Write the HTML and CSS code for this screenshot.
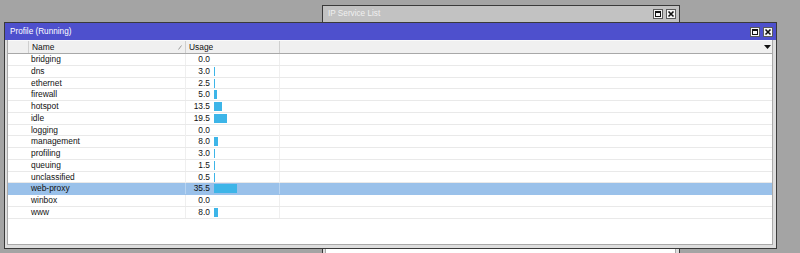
FILE: index.html
```html
<!DOCTYPE html>
<html lang="en">
<head>
    <meta charset="utf-8"/>
    <title>Profile (Running)</title>
    <link rel="stylesheet" href="styles.css">
</head>
<body>
<div class="desktop">

    <!-- window behind -->
    <div class="window back-window">
        <div class="titlebar titlebar-grey">
            <span class="title">IP Service List</span>
            <div class="buttons">
                <span class="btn btn-max"></span>
                <span class="btn btn-close">
                    <svg width="8" height="8" viewBox="0 0 8 8"><path d="M1.5 1.5 L6.5 6.5 M6.5 1.5 L1.5 6.5" stroke="#111" stroke-width="1.6"/></svg>
                </span>
            </div>
        </div>
        <div class="frame">
            <div class="list"></div>
        </div>
    </div>

    <!-- profile window -->
    <div class="window main-window">
        <div class="titlebar titlebar-blue">
            <span class="title">Profile (Running)</span>
            <div class="buttons">
                <span class="btn btn-max"></span>
                <span class="btn btn-close">
                    <svg width="8" height="8" viewBox="0 0 8 8"><path d="M1.5 1.5 L6.5 6.5 M6.5 1.5 L1.5 6.5" stroke="#111" stroke-width="1.6"/></svg>
                </span>
            </div>
        </div>
        <div class="frame">
            <div class="list">
                <div class="row head">
                    <div class="cell"></div>
                    <div class="cell name">Name
                        <svg class="sort" width="4" height="5" viewBox="0 0 4 5"><path d="M0.5 4.5 L3.5 0.5" stroke="#9a9a9a" stroke-width="1"/></svg>
                    </div>
                    <div class="cell usage">Usage</div>
                    <div class="cell rest"></div>
                    <div class="cell menu">
                        <svg width="7" height="4" viewBox="0 0 7 4"><path d="M0 0 H7 L3.5 4 Z" fill="#111"/></svg>
                    </div>
                </div>

                <div class="row"><div class="cell"></div><div class="cell name">bridging</div><div class="cell usage"><span class="val">0.0</span></div><div class="cell rest"></div></div>
                <div class="row"><div class="cell"></div><div class="cell name">dns</div><div class="cell usage"><span class="val">3.0</span><span class="bar" style="width:1px"></span></div><div class="cell rest"></div></div>
                <div class="row"><div class="cell"></div><div class="cell name">ethernet</div><div class="cell usage"><span class="val">2.5</span><span class="bar" style="width:1px"></span></div><div class="cell rest"></div></div>
                <div class="row"><div class="cell"></div><div class="cell name">firewall</div><div class="cell usage"><span class="val">5.0</span><span class="bar" style="width:3px"></span></div><div class="cell rest"></div></div>
                <div class="row"><div class="cell"></div><div class="cell name">hotspot</div><div class="cell usage"><span class="val">13.5</span><span class="bar" style="width:8px"></span></div><div class="cell rest"></div></div>
                <div class="row"><div class="cell"></div><div class="cell name">idle</div><div class="cell usage"><span class="val">19.5</span><span class="bar" style="width:13px"></span></div><div class="cell rest"></div></div>
                <div class="row"><div class="cell"></div><div class="cell name">logging</div><div class="cell usage"><span class="val">0.0</span></div><div class="cell rest"></div></div>
                <div class="row"><div class="cell"></div><div class="cell name">management</div><div class="cell usage"><span class="val">8.0</span><span class="bar" style="width:4px"></span></div><div class="cell rest"></div></div>
                <div class="row"><div class="cell"></div><div class="cell name">profiling</div><div class="cell usage"><span class="val">3.0</span><span class="bar" style="width:1px"></span></div><div class="cell rest"></div></div>
                <div class="row"><div class="cell"></div><div class="cell name">queuing</div><div class="cell usage"><span class="val">1.5</span><span class="bar" style="width:1px"></span></div><div class="cell rest"></div></div>
                <div class="row"><div class="cell"></div><div class="cell name">unclassified</div><div class="cell usage"><span class="val">0.5</span><span class="bar" style="width:1px"></span></div><div class="cell rest"></div></div>
                <div class="row selected"><div class="cell"></div><div class="cell name">web-proxy</div><div class="cell usage"><span class="val">35.5</span><span class="bar" style="width:23px"></span></div><div class="cell rest"></div></div>
                <div class="row"><div class="cell"></div><div class="cell name">winbox</div><div class="cell usage"><span class="val">0.0</span></div><div class="cell rest"></div></div>
                <div class="row"><div class="cell"></div><div class="cell name">www</div><div class="cell usage"><span class="val">8.0</span><span class="bar" style="width:4px"></span></div><div class="cell rest"></div></div>
            </div>
        </div>
    </div>

</div>
</body>
</html>
```

FILE: styles.css
```css
html, body {
    margin: 0;
    padding: 0;
}

body {
    font-family: "Liberation Sans", Arial, sans-serif;
    font-size: 8.4px;
    color: #111;
}

.desktop {
    position: relative;
    width: 800px;
    height: 253px;
    overflow: hidden;
    background-color: #a4a4a4;
}

/* windows sit on the desktop at fixed spots */
.window {
    position: absolute;
    display: flex;
    flex-direction: column;
    box-sizing: border-box;
    border: 1px solid #3a3a3a;
    background-color: #dedede;
}

.back-window {
    left: 322px;
    top: 5px;
    width: 358px;
    height: 260px;
}

.main-window {
    left: 4px;
    top: 22px;
    width: 773px;
    height: 227px;
}

.titlebar {
    display: flex;
    align-items: center;
    justify-content: space-between;
    height: 17px;
    flex-shrink: 0;
    padding: 0 3px 0 5px;
}

.titlebar-blue {
    background-color: #4e50cd;
}

.titlebar-blue .title {
    color: #fff;
}

.titlebar-grey {
    height: 16px;
    background-color: #c2c2c2;
}

.titlebar-grey .title {
    color: #f0f0f0;
}

.title {
    font-size: 8.2px;
    line-height: 16px;
}

.buttons {
    display: flex;
    gap: 3px;
}

.btn {
    display: flex;
    align-items: center;
    justify-content: center;
    box-sizing: border-box;
    width: 10px;
    height: 10px;
    background-color: #f6f6f6;
    border: 1px solid #5a5a5a;
}

.btn-max::before {
    content: "";
    display: block;
    box-sizing: border-box;
    width: 6px;
    height: 6px;
    border: 1px solid #111;
    border-top-width: 2px;
}

.frame {
    flex: 1;
    display: flex;
    padding: 0 3px 3px 2px;
    min-height: 0;
}

.list {
    flex: 1;
    box-sizing: border-box;
    background-color: #fff;
    border: 1px solid #a9a9a9;
    border-top: none;
    overflow: hidden;
}

.row {
    display: grid;
    grid-template-columns: 20px 157px 94px 1fr 10px;
    box-sizing: border-box;
    height: 11.75px;
    line-height: 11px;
    border-bottom: 1px solid #e9e9e9;
}

.row .cell {
    display: flex;
    align-items: center;
    min-width: 0;
    white-space: nowrap;
}

.row .usage,
.row .rest {
    border-left: 1px solid #efefef;
    box-sizing: border-box;
}

.row .name {
    padding-left: 3px;
}

.head {
    height: 14px;
    background-color: #f0f0f0;
    border-top: 1px solid #fafafa;
    border-bottom: 1px solid #a8a8a8;
}

.head .cell + .cell {
    border-left: 1px solid #cfcfcf;
}

.head .menu {
    border-left: none !important;
    justify-content: center;
}

.head .name {
    justify-content: space-between;
    padding-right: 3px;
}

.head .usage {
    padding-left: 3px;
}

.sort {
    display: block;
}

.val {
    display: block;
    width: 24px;
    text-align: right;
}

.bar {
    display: block;
    height: 9px;
    margin-left: 4px;
    background-color: #3db5e8;
}

.selected {
    background-color: #9ac1ea;
    border-bottom-color: #9ac1ea;
}

.selected .usage,
.selected .rest {
    border-left-color: #b8d4f1;
}
```
